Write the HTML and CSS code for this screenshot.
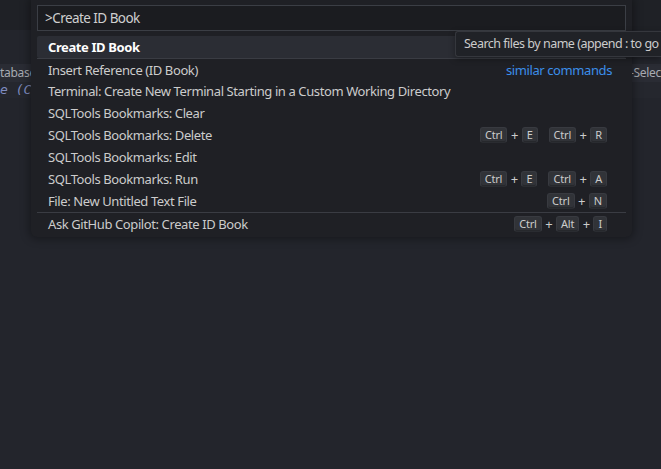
FILE: index.html
```html
<!DOCTYPE html>
<html>
<head>
<meta charset="utf-8">
<link rel="stylesheet" href="styles.css">
</head>
<body>
<div class="app">
  <div class="tabbar"></div>
  <div class="editor">
    <div class="line"></div>
    <div class="line hl"><span class="code-left">tabase</span><span class="code-right">-Selec</span></div>
    <div class="line hl2"><span class="code-it">e (C</span></div>
  </div>

  <div class="quickpick">
    <div class="input">&gt;Create ID Book</div>
    <div class="list">
      <div class="row selected"><span class="label bold">Create ID Book</span></div>
      <div class="row sep"><span class="label">Insert Reference (ID Book)</span><span class="group">similar commands</span></div>
      <div class="row"><span class="label">Terminal: Create New Terminal Starting in a Custom Working Directory</span></div>
      <div class="row"><span class="label">SQLTools Bookmarks: Clear</span></div>
      <div class="row"><span class="label">SQLTools Bookmarks: Delete</span>
        <span class="keys"><kbd>Ctrl</kbd><i>+</i><kbd>E</kbd><span class="chord"></span><kbd>Ctrl</kbd><i>+</i><kbd>R</kbd></span></div>
      <div class="row"><span class="label">SQLTools Bookmarks: Edit</span></div>
      <div class="row"><span class="label">SQLTools Bookmarks: Run</span>
        <span class="keys"><kbd>Ctrl</kbd><i>+</i><kbd>E</kbd><span class="chord"></span><kbd>Ctrl</kbd><i>+</i><kbd>A</kbd></span></div>
      <div class="row"><span class="label">File: New Untitled Text File</span>
        <span class="keys"><kbd>Ctrl</kbd><i>+</i><kbd>N</kbd></span></div>
      <div class="row sep"><span class="label">Ask GitHub Copilot: Create ID Book</span>
        <span class="keys"><kbd>Ctrl</kbd><i>+</i><kbd>Alt</kbd><i>+</i><kbd>I</kbd></span></div>
    </div>
  </div>

  <div class="tooltip">Search files by name (append : to go</div>
</div>
</body>
</html>
```
FILE: styles.css
```css
* { box-sizing: border-box; }
html, body { margin: 0; height: 100%; }
body {
  background: #23252c;
  font-family: "Noto Sans", "Open Sans", sans-serif;
  overflow: hidden;
}
.app { position: relative; width: 661px; height: 469px; }
.tabbar { height: 30px; background: #1f2126; }
.editor { padding-top: 16px; }
.line { height: 18px; font-size: 12px; line-height: 18px; letter-spacing: -0.3px; }
.hl { background: #2a2c34; display: flex; justify-content: space-between; }
.hl2 { background: #25272e; height: 16px; line-height: 16px; }
.code-left { color: #a8abb2; }
.code-right { color: #a8abb2; }
.code-it { color: #7f8cc0; font-style: italic; font-family: "DejaVu Sans Mono", monospace; font-size: 13px; letter-spacing: 0; }

.quickpick {
  position: absolute;
  left: 31px; top: 0;
  width: 601px;
  background: #1f2025;
  border-radius: 0 0 6px 6px;
  box-shadow: 0 0 8px 2px rgba(0,0,0,0.35);
  padding: 5px 6px 3px;
  letter-spacing: -0.4px;
}
.input {
  height: 26px;
  border: 1px solid #3b3e45;
  background: #1b1c20;
  color: #cfcfcf;
  font-size: 13.5px;
  line-height: 24px;
  padding-left: 7px;
  letter-spacing: -0.55px;
}
.list { margin-top: 5px; }
.row {
  height: 22px;
  display: flex;
  align-items: center;
  padding: 0 19px 0 11px;
  font-size: 13px;
  color: #cccccc;
  white-space: nowrap;
}
.row.sep { border-top: 1px solid #3a3c43; }
.row.selected { background: #2b2d34; color: #ffffff; border-radius: 2px; }
.bold { font-weight: 700; }
.label { flex: 1; }
.group { color: #3b8eea; margin-right: -5px; }
.keys { display: flex; align-items: center; letter-spacing: -0.2px; }
kbd {
  font-family: inherit;
  font-size: 11px;
  line-height: 14px;
  height: 16px;
  padding: 0 4px;
  background: #313338;
  border: 1px solid #383a40;
  border-bottom-color: #2a2c31;
  border-radius: 3px;
  color: #cccccc;
  box-shadow: inset 0 -1px 0 #26282c;
}
.keys i { font-style: normal; margin: 0 3.5px; font-size: 13px; color: #cccccc; }
.chord { width: 11px; }

.tooltip {
  position: absolute;
  left: 455px; top: 31px;
  width: 206px;
  height: 26px;
  padding: 0 0 0 8px;
  background: #202227;
  border: 1px solid #35373d;
  border-right: none;
  border-radius: 3px 0 0 3px;
  color: #cccccc;
  font-size: 12.5px;
  line-height: 24px;
  letter-spacing: -0.5px;
  white-space: nowrap;
  box-shadow: 0 2px 6px rgba(0,0,0,0.35);
}
```
